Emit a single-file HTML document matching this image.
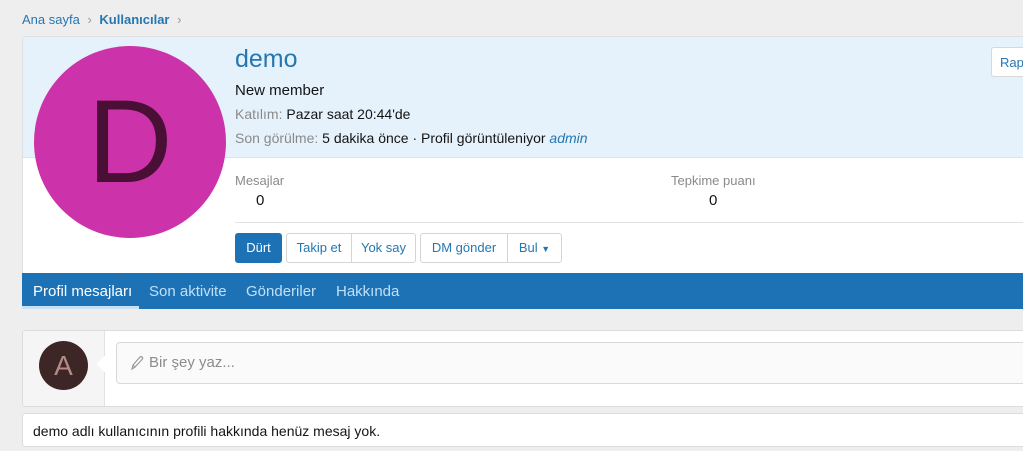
<!DOCTYPE html>
<html><head><meta charset="utf-8"><style>
*{box-sizing:border-box;margin:0;padding:0}
body{width:1023px;height:451px;overflow:hidden;background:#eeeeee;font-family:"Liberation Sans",sans-serif;position:relative;color:#141414}
.a{position:absolute;white-space:nowrap}
.crumb{top:12px;left:22px;font-size:13px;color:#2577b1}
.card{position:absolute;left:22px;top:36px;width:1010px;height:273px;background:#fff;border:1px solid #dfdfdf;border-radius:3px;overflow:hidden}
.head{position:absolute;left:0;top:0;right:0;height:121px;background:#e6f2fb;border-bottom:1px solid #d8e4ee}
.av{position:absolute;left:11px;top:9px;width:192px;height:192px;border-radius:50%;background:#cc33aa;color:#4a0f35;font-size:118px;text-align:center;line-height:192px}
.tabs{position:absolute;left:0;right:0;top:236px;height:37px;background:#1d72b5}
.tab{position:absolute;top:10px;font-size:15px;color:#bfe0f7}
.btn{position:absolute;top:233px;height:30px;border:1px solid #d5d5d5;background:#fff;font-size:13px;color:#2577b1;line-height:28px;text-align:center}
.lbl{color:#8a8a8a}
</style></head><body>
<div class="a crumb">Ana sayfa <span style="color:#999;margin:0 4px">›</span> <b>Kullanıcılar</b> <span style="color:#999;margin-left:4px">›</span></div>
<div class="card">
 <div class="head"></div>
 <div class="av">D</div>
 <div class="a" style="left:212px;top:8px;font-size:25px;color:#2577b1">demo</div>
 <div class="a" style="left:212px;top:45px;font-size:15px">New member</div>
 <div class="a" style="left:212px;top:69px;font-size:14px"><span class="lbl">Katılım:</span> Pazar saat 20:44'de</div>
 <div class="a" style="left:212px;top:93px;font-size:14px"><span class="lbl">Son görülme:</span> 5 dakika önce · Profil görüntüleniyor <i style="color:#2577b1">admin</i></div>
 <div class="a" style="left:968px;top:10px;width:60px;height:30px;background:#fff;border:1px solid #d8d8d8;border-radius:3px;font-size:13px;color:#2577b1;padding:7px 8px">Rapor</div>
 <div class="a lbl" style="left:212px;top:136px;font-size:13px">Mesajlar</div>
 <div class="a" style="left:233px;top:155px;font-size:15px">0</div>
 <div class="a lbl" style="left:648px;top:136px;font-size:13px">Tepkime puanı</div>
 <div class="a" style="left:686px;top:155px;font-size:15px">0</div>
 <div class="a" style="left:212px;top:185px;width:800px;height:1px;background:#e2e2e2"></div>
</div>
<div class="btn" style="left:235px;width:47px;background:#1d72b5;border-color:#1d72b5;color:#fff;border-radius:3px">Dürt</div>
<div class="btn" style="left:286px;width:66px;border-radius:3px 0 0 3px">Takip et</div>
<div class="btn" style="left:351px;width:65px;border-radius:0 3px 3px 0">Yok say</div>
<div class="btn" style="left:420px;width:88px;border-radius:3px 0 0 3px">DM gönder</div>
<div class="btn" style="left:507px;width:55px;border-radius:0 3px 3px 0">Bul <span style="font-size:9px">▼</span></div>
<div class="a" style="left:22px;top:273px;width:1010px;height:36px;background:#1d72b5"></div>
<div class="a tab" style="left:33px;top:283px;color:#fff">Profil mesajları</div>
<div class="a" style="left:22px;top:306px;width:117px;height:3px;background:#c8e1f5"></div>
<div class="a tab" style="left:149px;top:283px">Son aktivite</div>
<div class="a tab" style="left:246px;top:283px">Gönderiler</div>
<div class="a tab" style="left:336px;top:283px">Hakkında</div>
<div class="a" style="left:22px;top:330px;width:1010px;height:77px;background:#fff;border:1px solid #dcdcdc;border-radius:3px;overflow:hidden">
 <div style="position:absolute;left:0;top:0;width:82px;height:100%;background:#f5f5f5;border-right:1px solid #e3e3e3"></div>
 <div style="position:absolute;left:76px;top:27px;width:12px;height:12px;background:#fff;transform:rotate(45deg)"></div>
 <div style="position:absolute;left:16px;top:10px;width:49px;height:49px;border-radius:50%;background:#3d2626;color:#b58a86;font-size:28px;text-align:center;line-height:49px">A</div>
 <div style="position:absolute;left:93px;top:11px;width:930px;height:42px;background:#fafafa;border:1px solid #d8d8d8;border-radius:4px;font-size:15px;color:#8c8c8c;padding:11px 0 0 32px">Bir şey yaz...</div>
 <svg style="position:absolute;left:107px;top:24px" width="14" height="16" viewBox="0 0 14 16"><path d="M2 14 L3 10 L10 2 Q11.5 1 12.5 2.5 Q13 3.5 12 4.5 L5 12 Z M3 10 L5 12" fill="none" stroke="#999" stroke-width="1.2"/></svg>
</div>
<div class="a" style="left:22px;top:413px;width:1010px;height:34px;background:#fff;border:1px solid #dcdcdc;border-radius:3px;font-size:14px;padding:9px 0 0 10px">demo adlı kullanıcının profili hakkında henüz mesaj yok.</div>
</body></html>
